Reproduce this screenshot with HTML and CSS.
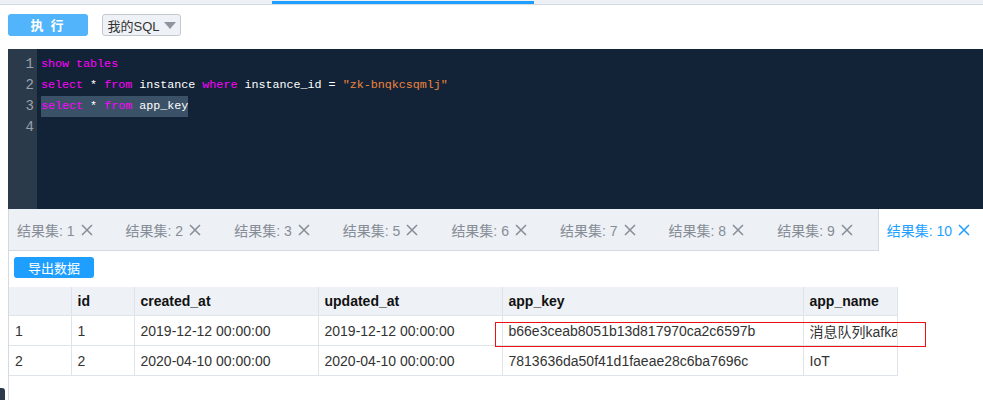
FILE: index.html
```html
<!DOCTYPE html>
<html>
<head>
<meta charset="utf-8">
<link rel="stylesheet" href="styles.css">
</head>
<body>
<div class="topbar"><div class="progress"></div></div>
<div class="toolbar">
  <button class="btn-run">执 行</button>
  <div class="select">我的SQL <span class="caret"></span></div>
</div>
<div class="editor">
  <div class="gutter">
    <div>1</div><div>2</div><div>3</div><div>4</div>
  </div>
  <div class="code">
    <div class="ln"><span class="kw">show tables</span></div>
    <div class="ln"><span class="kw">select</span> * <span class="kw">from</span> instance <span class="kw">where</span> instance_id = <span class="str">"zk-bnqkcsqmlj"</span></div>
    <div class="ln"><span class="sel"><span class="kw">select</span> * <span class="kw">from</span> app_key</span></div>
    <div class="ln"></div>
  </div>
</div>
<div class="panel">
  <div class="tabs">
    <div class="tab">结果集: 1 <svg class="x" viewBox="0 0 12 12"><path d="M1 1L11 11M11 1L1 11"/></svg></div>
    <div class="tab">结果集: 2 <svg class="x" viewBox="0 0 12 12"><path d="M1 1L11 11M11 1L1 11"/></svg></div>
    <div class="tab">结果集: 3 <svg class="x" viewBox="0 0 12 12"><path d="M1 1L11 11M11 1L1 11"/></svg></div>
    <div class="tab">结果集: 5 <svg class="x" viewBox="0 0 12 12"><path d="M1 1L11 11M11 1L1 11"/></svg></div>
    <div class="tab">结果集: 6 <svg class="x" viewBox="0 0 12 12"><path d="M1 1L11 11M11 1L1 11"/></svg></div>
    <div class="tab">结果集: 7 <svg class="x" viewBox="0 0 12 12"><path d="M1 1L11 11M11 1L1 11"/></svg></div>
    <div class="tab">结果集: 8 <svg class="x" viewBox="0 0 12 12"><path d="M1 1L11 11M11 1L1 11"/></svg></div>
    <div class="tab">结果集: 9 <svg class="x" viewBox="0 0 12 12"><path d="M1 1L11 11M11 1L1 11"/></svg></div>
    <div class="tab active">结果集: 10 <svg class="x" viewBox="0 0 12 12"><path d="M1 1L11 11M11 1L1 11"/></svg></div>
  </div>
  <div class="panel-body">
    <button class="btn-export">导出数据</button>
    <table class="grid">
      <colgroup>
        <col style="width:62px"><col style="width:63px"><col style="width:184px"><col style="width:184px"><col style="width:301px"><col style="width:94px">
      </colgroup>
      <thead>
        <tr><th></th><th>id</th><th>created_at</th><th>updated_at</th><th>app_key</th><th>app_name</th></tr>
      </thead>
      <tbody>
        <tr><td>1</td><td>1</td><td>2019-12-12 00:00:00</td><td>2019-12-12 00:00:00</td><td>b66e3ceab8051b13d817970ca2c6597b</td><td class="clip">消息队列kafka</td></tr>
        <tr><td>2</td><td>2</td><td>2020-04-10 00:00:00</td><td>2020-04-10 00:00:00</td><td>7813636da50f41d1faeae28c6ba7696c</td><td>IoT</td></tr>
      </tbody>
    </table>
  </div>
</div>
<div class="mark"></div>
<div class="corner"></div>
</body>
</html>
```
FILE: styles.css
```css
html, body {
  margin: 0;
  padding: 0;
  background: #fff;
  font-family: "Liberation Sans", "Noto Sans CJK SC", sans-serif;
  width: 983px;
  height: 400px;
  overflow: hidden;
  position: relative;
}
.topbar {
  height: 4px;
  background: #edf0f5;
  border-bottom: 1px solid #d3dae4;
  display: flex;
  align-items: flex-end;
}
.progress {
  margin-left: 272px;
  width: 262px;
  height: 3px;
  background: #1e9fff;
}
.toolbar {
  display: flex;
  align-items: center;
  padding: 8px 0 0 8px;
  height: 23px;
}
.btn-run {
  width: 80px;
  height: 22px;
  border: none;
  border-radius: 3px;
  background: #52b5fb;
  color: #fff;
  font-family: "Noto Sans CJK SC", sans-serif;
  font-size: 13px;
  font-weight: bold;
  padding: 0;
  letter-spacing: 2px;
  line-height: 22px;
}
.select {
  margin-left: 14px;
  margin-top: 1px;
  height: 20px;
  width: 77px;
  box-sizing: content-box;
  border: 1px solid #c4c8cf;
  border-radius: 3px;
  background: #eef1f6;
  color: #333;
  font-size: 13px;
  font-family: "Liberation Sans", "Noto Sans CJK SC", sans-serif;
  display: flex;
  align-items: center;
  justify-content: center;
  gap: 4px;
}
.caret {
  width: 0;
  height: 0;
  border-left: 6px solid transparent;
  border-right: 6px solid transparent;
  border-top: 7px solid #8e959e;
  margin-top: 1px;
}
.editor {
  margin: 13px 0 0 8px;
  height: 160px;
  display: flex;
  background: #132337;
}
.gutter {
  width: 29px;
  background: #2b3a4a;
  color: #98a2ad;
  font-family: "Liberation Mono", monospace;
  font-size: 14px;
  text-align: right;
  padding-top: 5px;
  box-sizing: border-box;
  padding-right: 3px;
}
.gutter div {
  height: 21px;
  line-height: 21px;
}
.code {
  padding: 5px 0 0 4px;
  font-family: "Liberation Mono", monospace;
  font-size: 11.7px;
  color: #fff;
}
.ln {
  height: 21px;
  line-height: 21px;
  white-space: pre;
}
.kw { color: #ff00ff; }
.str { color: #f0843c; }
.sel {
  background: #3a5168;
  display: inline-block;
  height: 21px;
}
.panel {
  margin-left: 8px;
  border-left: 1px solid #d3dae4;
  height: 200px;
}
.tabs {
  display: flex;
  height: 41px;
  background: #edf0f5;
  border-bottom: 1px solid #d3dae4;
}
.tab {
  width: 108.6px;
  box-sizing: border-box;
  padding-left: 8px;
  display: flex;
  align-items: center;
  font-size: 14px;
  font-family: "Liberation Sans", "Noto Sans CJK SC", sans-serif;
  color: #868d96;
  white-space: nowrap;
  gap: 6px;
}
.tab.active {
  width: auto;
  flex: 1;
  background: #fff;
  border-left: 1px solid #d3dae4;
  margin-bottom: -1px;
  color: #1e9fff;
}
.x {
  width: 12px;
  height: 12px;
  stroke: currentColor;
  stroke-width: 1.5;
  fill: none;
}
.panel-body {
  padding: 6px 0 0 0;
}
.btn-export {
  margin-left: 5px;
  width: 80px;
  height: 21px;
  border: none;
  border-radius: 3px;
  background: #1e9fff;
  color: #fff;
  font-family: "Noto Sans CJK SC", sans-serif;
  font-size: 13px;
  padding: 0;
  line-height: 21px;
  display: block;
}
.grid {
  margin-top: 9px;
  border-collapse: collapse;
  table-layout: fixed;
  width: 888px;
  font-size: 14px;
  color: #333;
}
.grid th, .grid td {
  border: 1px solid #dfe4eb;
  text-align: left;
  padding: 0 0 0 6px;
  white-space: nowrap;
  overflow: hidden;
}
.grid tr > :first-child { border-left: none; }
.grid th {
  height: 28px;
  background: #eef1f6;
  color: #111;
  font-weight: bold;
  border-top: none;
}
.grid td {
  height: 29px;
}
.clip { text-overflow: clip; }
.mark {
  position: absolute;
  left: 495px;
  top: 322px;
  width: 429px;
  height: 23px;
  border: 1px solid #ee1111;
}
.corner {
  position: absolute;
  left: 0;
  top: 388px;
  width: 5px;
  height: 14px;
  background: #2b3a4a;
  border-radius: 0 3px 0 0;
}
```
